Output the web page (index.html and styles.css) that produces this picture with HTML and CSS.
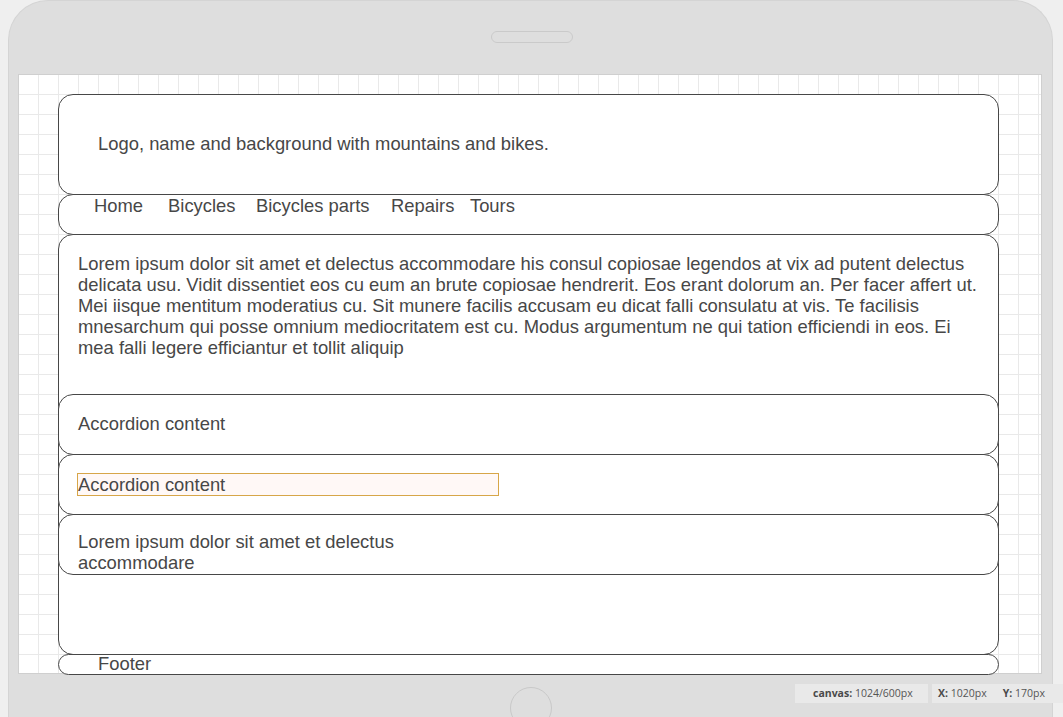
FILE: index.html
```html
<!DOCTYPE html>
<html>
<head>
<meta charset="utf-8">
<title>Wireframe</title>
<link rel="stylesheet" href="styles.css">
</head>
<body>
<div class="device">
  <div class="device-top"><div class="speaker"></div></div>
  <div class="canvas">
    <div class="wire">
      <div class="box header">Logo, name and background with mountains and bikes.</div>
      <div class="box nav">
        <span class="nav-item n1">Home</span>
        <span class="nav-item n2">Bicycles</span>
        <span class="nav-item n3">Bicycles parts</span>
        <span class="nav-item n4">Repairs</span>
        <span class="nav-item">Tours</span>
      </div>
      <div class="box main">
        <div class="intro">Lorem ipsum dolor sit amet et delectus accommodare his consul copiosae legendos at vix ad putent delectus delicata usu. Vidit dissentiet eos cu eum an brute copiosae hendrerit. Eos erant dolorum an. Per facer affert ut. Mei iisque mentitum moderatius cu. Sit munere facilis accusam eu dicat falli consulatu at vis. Te facilisis mnesarchum qui posse omnium mediocritatem est cu. Modus argumentum ne qui tation efficiendi in eos. Ei mea falli legere efficiantur et tollit aliquip</div>
        <div class="accordion">
          <div class="acc"><div class="acc-text">Accordion content</div></div>
          <div class="acc acc-sel"><div class="acc-text selected">Accordion content</div></div>
          <div class="acc acc-top"><div class="acc-text">Lorem ipsum dolor sit amet et delectus accommodare</div></div>
        </div>
      </div>
      <div class="box footer">Footer</div>
    </div>
  </div>
  <div class="home-btn"></div>
</div>
<div class="status">
  <div class="stat stat-canvas"><b>canvas:</b> 1024/600px</div>
  <div class="stat stat-xy"><span><b>X:</b> 1020px</span><span><b>Y:</b> 170px</span></div>
</div>
</body>
</html>
```
FILE: styles.css
```css
html, body {
  margin: 0;
  padding: 0;
}
body {
  background: #efefef;
  width: 1063px;
  height: 717px;
  overflow: hidden;
  position: relative;
  font-family: "Liberation Sans", Arial, sans-serif;
}
.device {
  margin-left: 8px;
  width: 1045px;
  height: 717px;
  box-sizing: border-box;
  background: #dedede;
  border: 1px solid #d4d4d4;
  border-bottom: none;
  border-radius: 40px 40px 0 0;
  padding-left: 9px;
  overflow: hidden;
}
.device-top {
  height: 73px;
  display: flex;
}
.speaker {
  margin: 30px 0 0 473px;
  width: 80px;
  height: 10px;
  border: 1px solid #cacaca;
  border-radius: 6px;
}
.canvas {
  width: 1024px;
  height: 600px;
  box-sizing: border-box;
  border: 1px solid #cfcfcf;
  background-color: #fff;
  background-image:
    linear-gradient(to right, #e9e9e9 1px, transparent 1px),
    linear-gradient(to bottom, #e9e9e9 1px, transparent 1px);
  background-size: 20px 20px;
  background-position: -1px -1px;
  padding: 19px 0 0 39px;
}
.wire {
  width: 941px;
  color: #474747;
  font-size: 18.4px;
  line-height: 21px;
}
.box {
  box-sizing: border-box;
  border: 1px solid #474747;
  border-radius: 15px;
  background: #fff;
}
.box + .box {
  margin-top: -1px;
}
.header {
  height: 101px;
  display: flex;
  align-items: center;
  padding: 0 0 2px 39px;
}
.nav {
  height: 41px;
  display: flex;
  padding: 0 0 0 35px;
}
.nav-item.n1 { margin-right: 25px; }
.nav-item.n2 { margin-right: 20.5px; }
.nav-item.n3 { margin-right: 21.5px; }
.nav-item.n4 { margin-right: 15.6px; }
.main {
  height: 421px;
}
.intro {
  height: 159px;
  box-sizing: border-box;
  padding: 18px 14px 0 19px;
}
.accordion {
  margin: 0 -1px;
}
.acc {
  box-sizing: border-box;
  height: 61px;
  border: 1px solid #474747;
  border-radius: 15px;
  background: #fff;
  display: flex;
  align-items: center;
  padding: 0 0 2px 18px;
}
.acc + .acc {
  margin-top: -1px;
}
.acc-sel {
  padding-bottom: 0;
}
.acc-top {
  align-items: flex-start;
  padding-top: 15px;
}
.acc-text {
  width: 422px;
  box-sizing: border-box;
  border: 1px solid transparent;
}
.acc-text.selected {
  border-color: #d7a648;
  background: #fff8f6;
}
.footer {
  height: 21px;
  line-height: 17px;
  padding-left: 39px;
}
.home-btn {
  width: 40px;
  height: 40px;
  border: 1px solid #c9c9c9;
  border-radius: 50%;
  margin: 13px 0 0 492px;
}
.status {
  position: absolute;
  left: 795px;
  top: 684px;
  display: flex;
  gap: 4px;
  font-family: "Open Sans", "DejaVu Sans", sans-serif;
  font-size: 10.5px;
  color: #555;
}
.stat {
  height: 19px;
  line-height: 19px;
  background: #e9e9e9;
  box-sizing: border-box;
}
.stat b {
  font-weight: 700;
  color: #4a4a4a;
}
.stat-canvas {
  width: 133px;
  padding-left: 18px;
}
.stat-xy {
  width: 131px;
  padding-left: 6px;
  display: flex;
  gap: 16px;
}
```
